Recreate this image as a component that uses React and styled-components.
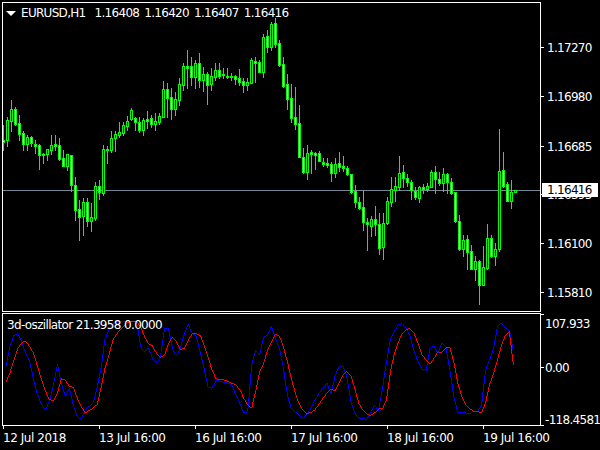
import React from 'react';
import styled, { createGlobalStyle } from 'styled-components';

// high, body top, body bottom, low in page pixels; one bar every 4px starting at x=3
const bars = [
  [125,140,142,150],[117,120,140,146],[100,109,121,131],[107,109,124,125],[115,123,134,140],[131,133,144,150],
  [135,137,144,150],[136,137,143,146],[140,144,146,153],[144,145,155,169],[153,154,155,163],[149,149,154,160],
  [135,145,150,154],[135,144,146,150],[138,145,159,160],[150,158,166,166],[154,154,166,170],[155,155,185,191],
  [177,185,210,220],[200,209,217,240],[198,202,216,235],[198,202,221,226],[203,217,221,231],[182,186,218,220],
  [180,186,192,199],[145,149,193,195],[146,149,150,163],[131,138,150,152],[131,134,138,151],[122,132,135,137],
  [122,125,133,135],[116,121,126,130],[108,110,119,120],[117,118,122,130],[117,122,130,132],[118,120,130,135],
  [111,119,121,128],[115,118,124,127],[113,121,124,130],[113,116,122,124],[81,89,117,117],[83,89,98,117],
  [88,97,109,119],[92,99,109,115],[78,84,100,105],[63,66,85,90],[50,66,68,88],[57,66,77,85],
  [60,63,77,88],[53,63,80,87],[67,74,80,91],[72,74,85,104],[68,76,84,90],[63,70,77,80],
  [63,70,76,78],[68,74,75,78],[68,76,77,78],[73,76,77,80],[75,76,79,84],[69,78,82,85],
  [78,81,85,92],[78,82,85,90],[58,60,83,83],[57,61,63,82],[60,62,72,72],[34,37,72,77],
  [30,36,47,52],[22,24,47,50],[18,23,44,47],[40,43,65,66],[57,64,86,87],[74,84,99,109],
  [84,98,118,122],[87,117,124,129],[105,123,157,157],
  [148,157,172,173],[145,153,172,179],[150,152,154,173],[152,153,155,169],[151,153,161,161],[158,162,164,166],
  [158,163,165,167],[162,164,173,181],[158,164,173,177],[152,163,167,171],[156,166,168,171],[166,168,174,175],
  [174,174,192,193],[185,191,202,207],[197,202,208,209],[191,207,222,230],[218,222,224,250],[216,219,226,236],
  [206,219,224,235],[213,224,248,254],[213,223,247,259],[197,201,223,224],[177,189,202,206],[177,186,190,201],
  [156,173,187,190],[165,172,178,187],[174,178,182,186],[180,182,190,199],[187,191,197,199],[186,187,198,202],
  [184,187,189,193],[183,186,189,191],[170,172,187,187],[166,172,179,193],[172,179,183,185],[168,174,183,191],
  [173,174,182,193],[178,182,193,194],[192,192,221,222],[215,221,249,250],[235,240,249,256],[235,239,252,269],
  [245,251,269,269],[256,261,269,280],[260,261,285,304],[246,267,285,285],[224,238,268,269],[235,238,256,257],
  [243,249,256,265],[129,171,249,251],[152,170,186,187],[182,184,201,201],[180,192,201,208],[190,190,192,192],
];

// oscillator values as read off a 3x crop of the indicator window
const blueLine = [
  185,125,90,85,110,145,170,225,270,300,315,290,240,178,235,275,250,300,335,345,315,305,295,250,190,
  100,75,55,50,48,48,48,48,50,125,140,128,160,173,155,70,68,130,153,130,85,57,85,92,140,190,248,250,
  228,228,232,235,240,270,295,325,322,180,135,150,95,90,62,100,130,190,270,312,322,332,
  342,328,310,285,265,250,235,268,215,185,182,215,290,325,340,341,345,325,302,318,250,170,100,78,57,
  55,68,95,140,170,192,197,130,122,145,113,125,195,275,325,325,325,327,320,322,300,195,165,130,65,52,
  68,78,135,
];
const redLine = [
  232,205,165,130,112,108,125,145,185,225,260,285,290,265,222,225,245,247,280,305,325,318,310,300,250,
  190,150,105,85,70,58,50,47,47,65,95,115,122,145,157,150,115,95,110,133,130,105,85,85,90,120,155,195,
  222,223,225,230,235,240,255,280,300,310,260,200,175,135,110,88,92,125,170,220,265,298,
  318,328,323,315,298,280,265,252,258,235,210,200,212,250,295,315,328,333,325,313,313,285,200,145,110,
  85,72,70,85,115,150,165,177,160,140,142,128,128,170,235,275,300,312,320,320,325,295,240,205,165,120,
  90,78,180,
];

const priceTicks = [
  { y: 47, label: '1.17270' },
  { y: 96, label: '1.16980' },
  { y: 146, label: '1.16685' },
  { y: 194, label: '1.16395' },
  { y: 243, label: '1.16100' },
  { y: 292, label: '1.15810' },
];
const indicatorTicks = [
  { y: 314, mark: true },
  { y: 323, label: '107.933' },
  { y: 367, label: '0.00', mark: true },
  { y: 419, label: '-118.4581' },
  { y: 425, mark: true },
];
const timeLabels = ['12 Jul 2018', '13 Jul 16:00', '16 Jul 16:00', '17 Jul 16:00', '18 Jul 16:00', '19 Jul 16:00'];

const barX = (i) => 3 + i * 4;

// every bar opens about where the last one closed, which gives its direction
const withDirection = () => {
  let prevClose = bars[0][1];
  return bars.map(([high, top, bottom, low]) => {
    const up = Math.abs(bottom - prevClose) < Math.abs(top - prevClose);
    prevClose = up ? top : bottom;
    return { high, top, bottom, low, up };
  });
};

const GlobalStyle = createGlobalStyle`
  html, body {
    margin: 0;
    padding: 0;
    background: #000;
  }
`;

const Terminal = styled.div`
  width: 600px;
  height: 450px;
  box-sizing: border-box;
  padding: 2px 0 0 2px;
  background: #000;
  color: #fff;
  overflow: hidden;
  font-family: "DejaVu Sans", "Liberation Sans", sans-serif;
  font-size: 12px;
  letter-spacing: -0.7px;
  line-height: 14px;
  display: grid;
  grid-template-columns: 539px 59px;
  grid-template-rows: 310px 114px 22px;
`;

const Pane = styled.div`
  position: relative;
  box-sizing: border-box;
  border: 1px solid #fff;
  overflow: hidden;
  margin-top: ${(p) => p.$gap || 0}px;
`;

const PlotArea = styled.svg`
  display: block;
  width: 100%;
  height: 100%;
`;

const Legend = styled.div`
  position: absolute;
  display: flex;
  align-items: center;
  gap: 5px;
  top: ${(p) => p.$top}px;
  left: ${(p) => p.$left}px;
  letter-spacing: ${(p) => p.$spacing}px;
  white-space: nowrap;
`;

const SymbolName = styled.span`
  margin-right: 4px;
`;

const MenuArrow = styled.span`
  width: 0;
  height: 0;
  border-left: 5px solid transparent;
  border-right: 5px solid transparent;
  border-top: 5px solid #fff;
`;

const ScaleColumn = styled.div`
  position: relative;
`;

const ScaleEntry = styled.div`
  position: absolute;
  top: ${(p) => p.$top}px;
  left: 0;
  right: 0;
  height: 14px;
  white-space: nowrap;
  padding-left: ${(p) => p.$indent}px;
  &::before {
    content: '';
    display: ${(p) => (p.$mark ? 'block' : 'none')};
    position: absolute;
    left: 0;
    top: 6px;
    width: 3px;
    height: 1px;
    background: #fff;
  }
`;

const LastPrice = styled.div`
  position: absolute;
  top: 181px;
  left: 1px;
  width: 56px;
  height: 14px;
  padding-left: 5px;
  box-sizing: border-box;
  background: #fff;
  color: #000;
`;

const TimeAxis = styled.div`
  grid-column: 1 / 3;
  display: flex;
  padding-left: 1px;
  letter-spacing: -0.45px;
`;

const TimeEntry = styled.div`
  flex: 0 0 96px;
  white-space: nowrap;
`;

const TimeTick = styled.div`
  width: 1px;
  height: 3px;
  margin-bottom: 2px;
  background: #fff;
`;

function Candles() {
  return (
    <g shapeRendering="crispEdges">
      {withDirection().map((bar, i) => {
        const x = barX(i);
        return (
          <g key={x}>
            <rect x={x} y={bar.high} width="1" height={bar.low - bar.high + 1} fill="#00ff00" />
            <rect x={x - 1} y={bar.top} width="3" height={bar.bottom - bar.top + 1} fill="#00ff00" />
            {bar.bottom - bar.top > 1 && (
              <rect x={x} y={bar.top + 1} width="1" height={bar.bottom - bar.top - 1} fill={bar.up ? '#000' : '#fff'} />
            )}
          </g>
        );
      })}
    </g>
  );
}

function OscillatorLine({ values, color }) {
  const points = values.map((v, i) => `${barX(i) + 0.5},${305 + v / 3 + 0.5}`).join(' ');
  return <polyline points={points} fill="none" stroke={color} strokeWidth="1" shapeRendering="crispEdges" />;
}

export default function App() {
  return (
    <>
      <GlobalStyle />
      <Terminal>
        <Pane>
          <PlotArea viewBox="3 3 537 308">
            <rect x="3" y="190" width="537" height="1" fill="#778899" shapeRendering="crispEdges" />
            <Candles />
          </PlotArea>
          <Legend $top={3} $left={3} $spacing={-0.7}>
            <MenuArrow />
            <SymbolName>EURUSD,H1</SymbolName>
            <span>1.16408</span>
            <span>1.16420</span>
            <span>1.16407</span>
            <span>1.16416</span>
          </Legend>
        </Pane>
        <ScaleColumn>
          {priceTicks.map((t) => (
            <ScaleEntry key={t.label} $top={t.y - 8} $indent={6} $mark>
              {t.label}
            </ScaleEntry>
          ))}
          <LastPrice>1.16416</LastPrice>
        </ScaleColumn>
        <Pane $gap={1}>
          <PlotArea viewBox="3 314 537 112">
            <OscillatorLine values={blueLine} color="#0000ff" />
            <OscillatorLine values={redLine} color="#ff0000" />
          </PlotArea>
          <Legend $top={4} $left={4} $spacing={-0.65}>
            <span>3d-oszillator 21.3958 0.0000</span>
          </Legend>
        </Pane>
        <ScaleColumn>
          {indicatorTicks.map((t) => (
            <ScaleEntry key={t.y} $top={t.y - 318} $indent={4} $mark={t.mark}>
              {t.label}
            </ScaleEntry>
          ))}
        </ScaleColumn>
        <TimeAxis>
          {timeLabels.map((label) => (
            <TimeEntry key={label}>
              <TimeTick />
              {label}
            </TimeEntry>
          ))}
        </TimeAxis>
      </Terminal>
    </>
  );
}
